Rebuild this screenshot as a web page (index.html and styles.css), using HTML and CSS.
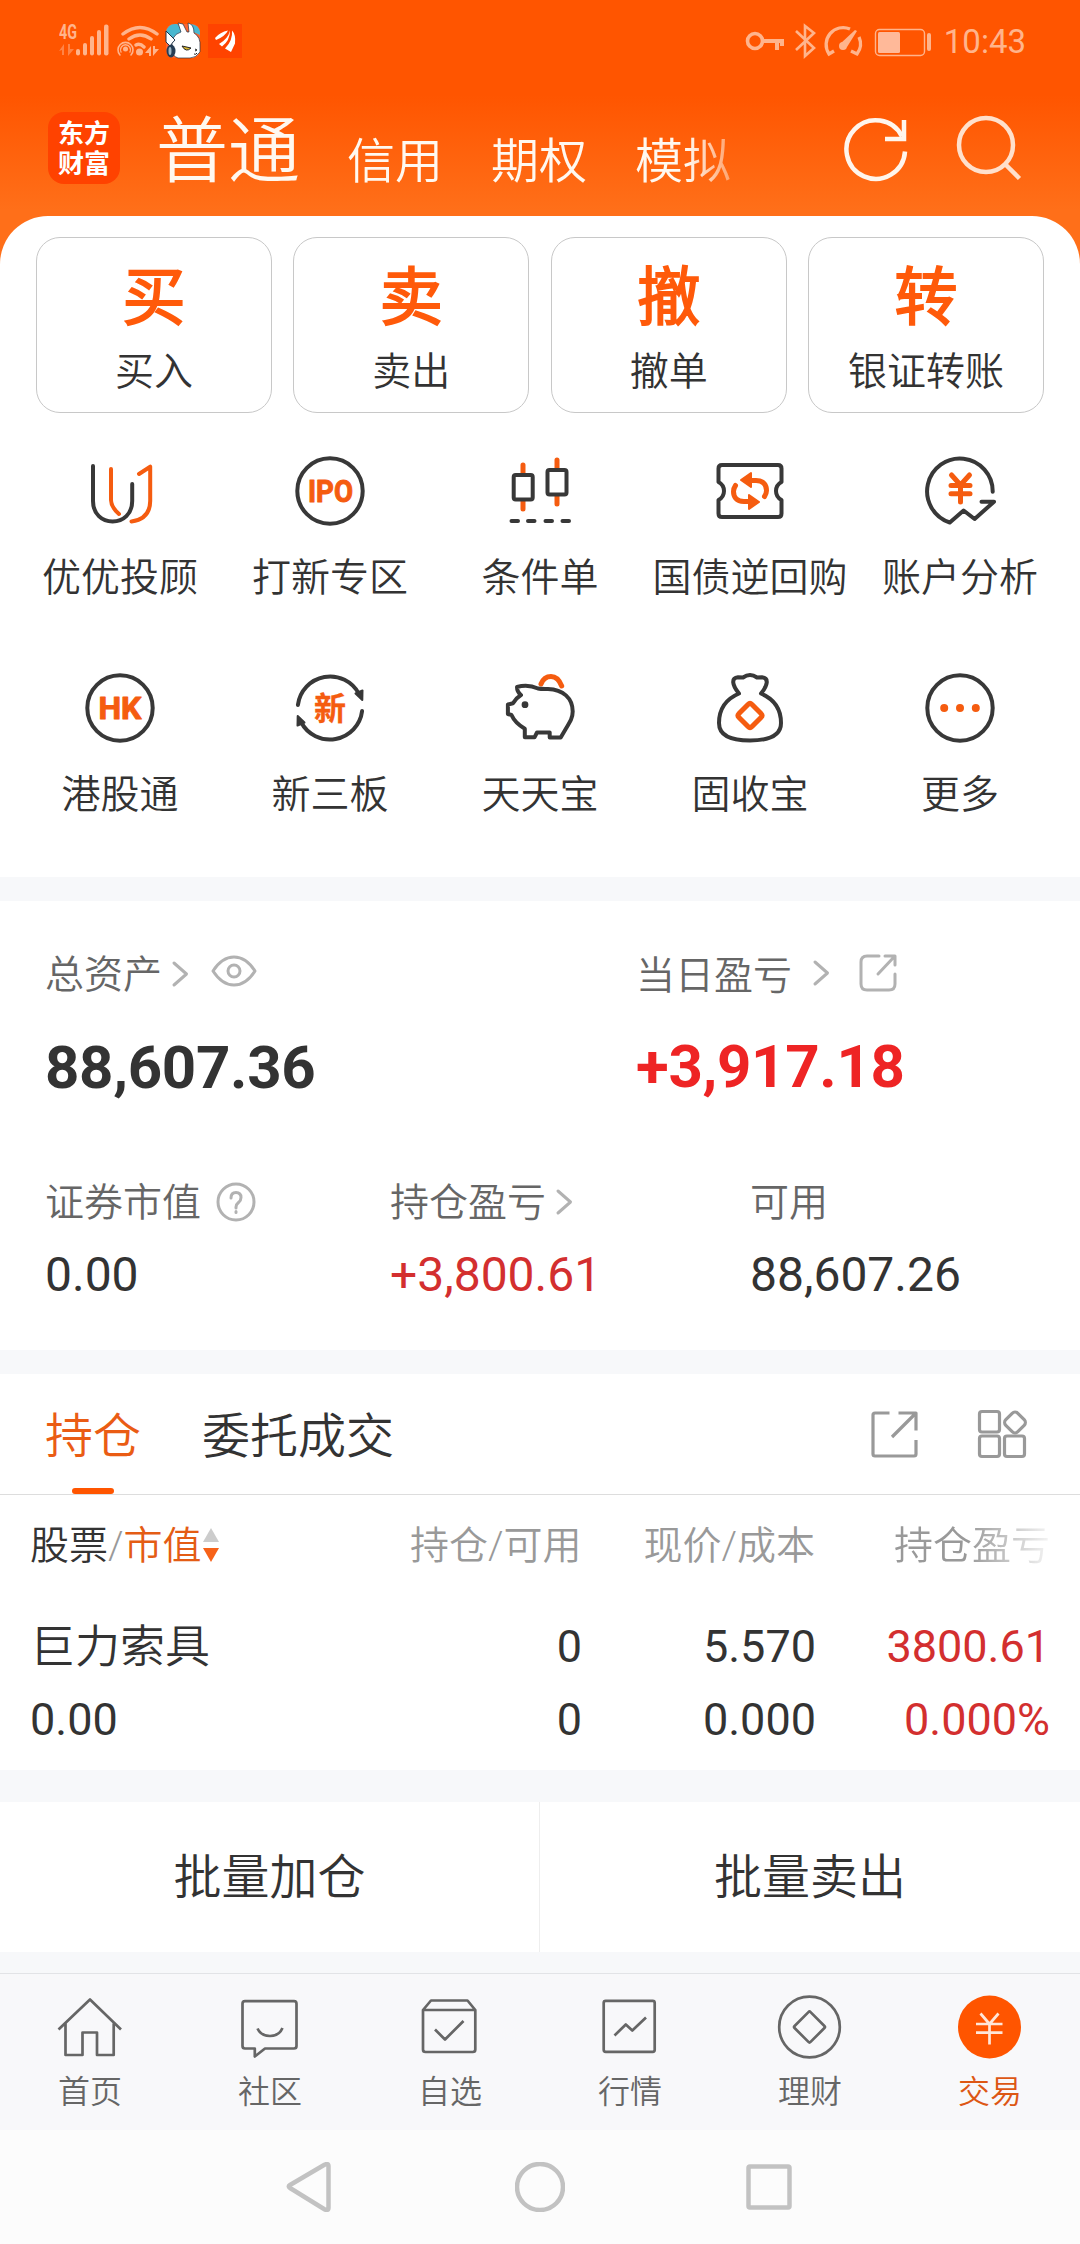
FILE: index.html
```html
<!DOCTYPE html>
<html lang="zh-CN">
<head>
<meta charset="utf-8">
<title>东方财富 交易</title>
<link rel="stylesheet" href="styles.css">
</head>
<body>
<header class="header">
  <div class="status">
    <svg class="status-left" width="200" height="40" viewBox="0 0 200 40">
      <g fill="#ffb48c">
        <text class="net" x="0" y="19" textLength="18" lengthAdjust="spacingAndGlyphs">4G</text>
        <path d="M0 31l5-7v11h-2v-5zM7 24v11M9 24h2v5h4l-6 7z" opacity=".5"/>
        <rect x="17" y="29" width="4" height="6.500" rx="2"/><rect x="24" y="23" width="4" height="12.500" rx="2"/><rect x="31" y="16" width="4" height="19.500" rx="2"/><rect x="38" y="10" width="4" height="25.500" rx="2"/><rect x="45" y="4.500" width="4.500" height="31" rx="2"/>
        <circle cx="80.500" cy="32" r="3.500"/><circle cx="66.500" cy="29" r="2.500"/>
        <path d="M86 33l6-7v10h-2v-3zM94 26h2v3h4l-6 7z"/>
      </g>
      <g fill="none" stroke="#ffb48c" stroke-width="3.400" stroke-linecap="round">
        <path d="M64 14q17-13 34 0M70 19q11-8 22 0M77 25q4-2 8 2"/>
        <path d="M61 35a7.500 7.500 0 1 1 11 0" stroke-width="1.600"/><path d="M62 32a5 5 0 1 1 9 0" stroke-width="1.400"/>
      </g>
      <rect x="107" y="4" width="34" height="34" rx="8" fill="#ff6430"/>
      <path d="M107 22v-10q2-8 9-8h2l8 8-10 6zM132 4q8 1 9 8v3l-9-4z" fill="#49b7cf"/>
      <path d="M113 30q-2-15 9-18L119 3l5 1 4 8h2l-1-9q6 1 6 10 7 4 6 14v5q-4 6-10 6h-12q-6-2-6-8z" fill="#fff" stroke="#203448" stroke-width=".7"/>
      <path d="M107 11l9 9q-4 3-4 7l-5-5z" fill="#fff" stroke="#203448"/>
      <ellipse cx="112" cy="31" rx="4.500" ry="6.500" fill="#263d54"/><ellipse cx="111" cy="31" rx="1.500" ry="4" fill="#9fb9c6"/>
      <path d="M123 26l9 2q-5 5-9-2z" fill="#d9b731" stroke="#222"/><path d="M136 29l2 1-2 1M135 34q2 1 3-1" fill="none" stroke="#222"/>
      <rect x="149" y="4" width="34" height="34" fill="#ff4300"/>
      <path d="M156 18q5-6 13-7.500-3 6-12 9.500zM160 24q9-5 11-13.500 0 10-8 16zM166 28.500q8-8 7-18 4 4 3 13l-4 8.500z" fill="#fff"/>
    </svg>
    <svg class="status-right" width="190" height="40" viewBox="0 0 190 40">
      <g fill="none" stroke="#ffb48c" stroke-width="3.600">
        <circle cx="14" cy="21" r="7.500"/><path d="M21 21h22M36 21v9M41 21v5" stroke-width="4"/>
        <path d="M55 11l18 17-9 8V6l9 7-18 17" stroke-width="2.600"/>
        <path d="M109 9A17 17 0 0 0 88 34l5-3M118 17q4 9-2 17l-6-3" stroke-width="3.300"/>
        <rect x="134.500" y="9.500" width="49" height="26" rx="4" stroke-width="1.400"/>
      </g>
      <path d="M99 24l15-14 2 1-10 16z" fill="#ffb48c"/><circle cx="102" cy="26" r="4" fill="#ffb48c"/>
      <rect x="137" y="12" width="22" height="21" rx="1.500" fill="#ffb999"/><rect x="186" y="13" width="4" height="18" rx="2" fill="#ffb48c"/>
    </svg>
    <span class="time">10:43</span>
  </div>
  <nav class="modes">
    <div class="logo"><span>东方</span><span>财富</span></div>
    <span class="mode mode-on">普通</span>
    <div class="mode-list"><span>信用</span><span>期权</span><span>模拟</span></div>
    <svg class="hicon" width="70" height="70" viewBox="0 0 70 70" fill="none" stroke="#fff5ec" stroke-width="4.500"><path d="M65 36.500A29.300 29.300 0 1 1 62 21.500"/><path d="M64 5v19H45"/></svg>
    <svg class="hicon search" width="70" height="70" viewBox="0 0 70 70" fill="none" stroke="#ffe0cc" stroke-width="4.500"><circle cx="31" cy="31" r="27"/><path d="M50 50l14.500 14.500"/></svg>
  </nav>
</header>

<section class="panel actions">
  <div class="quick">
    <div class="card"><b>买</b><span>买入</span></div>
    <div class="card"><b>卖</b><span>卖出</span></div>
    <div class="card"><b>撤</b><span>撤单</span></div>
    <div class="card"><b>转</b><span>银证转账</span></div>
  </div>
  <div class="grid">
    <div class="item"><svg class="ic" viewBox="0 0 72 72"><path d="M9 11V46C9 59 18 66.500 28.600 66.500S48.200 59 48.200 46V29"/><path class="o" d="M27 14V45Q27 52 35 59M55 19L66.200 11.700V46Q66 64 47.500 66.500"/></svg><span>优优投顾</span></div>
    <div class="item"><svg class="ic" viewBox="0 0 72 72"><circle cx="36" cy="36" r="32.700"/><text class="t" x="14" y="47.300" textLength="45" lengthAdjust="spacingAndGlyphs">IPO</text></svg><span>打新专区</span></div>
    <div class="item"><svg class="ic" viewBox="0 0 72 72"><path class="o thick" d="M19 10V18M19 46V54M53 5V13M53 41V49"/><rect x="9.700" y="20" width="19" height="24.500" rx="2"/><rect x="43.500" y="15" width="19" height="24.500" rx="2"/><path d="M7.500 66H14M24 66h6.500M41.500 66H48M58.500 66H65"/></svg><span>条件单</span></div>
    <div class="item"><svg class="ic" viewBox="0 0 72 72"><path d="M8 10H64q3.500 0 3.500 3.500V27q-5.500 3-5.500 9t5.500 9V58.500q0 3.500-3.500 3.500H8q-3.500 0-3.500-3.500V45q5.500-3 5.500-9T4.500 27V13.500Q4.500 10 8 10z"/><path class="o thick" d="M36 25.500h6c8 0 10.500 5 10.500 10q0 3-2 6"/><path class="of" d="M27 25l10-7v14z"/><g transform="rotate(180 36 36)"><path class="o thick" d="M36 25.500h6c8 0 10.500 5 10.500 10q0 3-2 6"/><path class="of" d="M27 25l10-7v14z"/></g></svg><span>国债逆回购</span></div>
    <div class="item"><svg class="ic" viewBox="0 0 72 72"><path d="M68.700 36.700A32.800 32.800 0 1 0 25.800 67.500L39.600 55.500 50.600 64 70 46.700H57.500"/><path class="o thick" d="M27.500 20L36.500 30 45.500 20M36.500 30V47M27 30.500H46M27 38.700H46"/></svg><span>账户分析</span></div>
    <div class="item"><svg class="ic" viewBox="0 0 72 72"><circle cx="36" cy="36" r="32.700"/><text class="t" x="14.500" y="47.300" textLength="43" lengthAdjust="spacingAndGlyphs">HK</text></svg><span>港股通</span></div>
    <div class="item"><svg class="ic" viewBox="0 0 72 72"><path d="M3.900 33A32.500 32.500 0 0 1 65 22M68.100 39A32.500 32.500 0 0 1 7 50"/><path class="df" d="M68.300 28L61.500 21.500l7-3zM3.700 44l6.800 6.500-7 3z"/><text class="t xin" x="36" y="48" text-anchor="middle">新</text></svg><span>新三板</span></div>
    <div class="item"><svg class="ic" viewBox="0 0 72 72"><path class="o thick" d="M37 12Q40 4.500 47 4.500T57.700 14"/><path d="M13 15Q24 12 34 16.500Q37 17.200 44 17C59 17.500 68.700 26 68.700 39.500C68.700 46 66 50 62 56.500L56.700 65.500H45.700V60.500H33L30.500 65.300H20.800V56.700Q11 51 7.500 43L3.900 42V32.500L9 31.300Q12 26 17 23Q13 20 13 15z"/><circle class="df" cx="21" cy="32.700" r="2.400"/></svg><span>天天宝</span></div>
    <div class="item"><svg class="ic" viewBox="0 0 72 72"><path d="M25 21.500C18 13 17 6 24 5.300L29 5.500Q36 .500 43 5.500L48 5.300C55 6 54 13 47 21.500Q67 30 67 51C67 64 54 68.500 36 68.500S5 64 5 51Q5 30 25 21.500z"/><path class="o thick" d="M34 32.500q2-2 4 0l9 9q2 2 0 4l-9 9q-2 2-4 0l-9-9q-2-2 0-4z"/></svg><span>固收宝</span></div>
    <div class="item"><svg class="ic" viewBox="0 0 72 72"><circle cx="36" cy="36" r="32.700"/><g class="of"><circle cx="20.200" cy="36" r="3"/><circle cx="36" cy="36" r="3"/><circle cx="51.800" cy="36" r="3"/></g></svg><span>更多</span></div>
  </div>
</section>

<section class="panel assets">
  <div class="asset-top">
    <div class="col-main">
      <div class="lab">总资产<svg class="chev" viewBox="0 0 18 28"><path d="M3 3l12.500 11L3 25"/></svg><svg class="eye" viewBox="0 0 46 32"><path d="M2 16Q11 2 23 2T44 16Q35 30 23 30T2 16z"/><circle cx="23" cy="16" r="6"/></svg></div>
      <strong>88,607.36</strong>
    </div>
    <div class="col-day">
      <div class="lab lab-low">当日盈亏<svg class="chev chev-far" viewBox="0 0 18 28"><path d="M3 3l12.500 11L3 25"/></svg><svg class="share-sm" viewBox="0 0 40 40"><path d="M21 3H9q-6 0-6 6V31q0 6 6 6H31q6 0 6-6V21M27 3h10V12M36 4L20 21"/></svg></div>
      <strong class="up">+3,917.18</strong>
    </div>
  </div>
  <div class="asset-sub">
    <div><div class="lab">证券市值<svg class="help" viewBox="0 0 40 40"><circle cx="20" cy="20" r="18"/><path d="M15 16q0-5.500 5-5.500t5 5q0 3-2.500 5T20 25v1M20 29.500v1"/></svg></div><p>0.00</p></div>
    <div><div class="lab">持仓盈亏<svg class="chev" viewBox="0 0 18 28"><path d="M3 3l12.500 11L3 25"/></svg></div><p class="red">+3,800.61</p></div>
    <div><div class="lab">可用</div><p>88,607.26</p></div>
  </div>
</section>

<section class="panel holdings">
  <div class="tabs">
    <span class="tab tab-on">持仓</span><span class="tab">委托成交</span>
    <svg class="tool" viewBox="0 0 50 50"><path d="M20.500 4H6Q4 4 4 6V45q0 2 2 2H45q2 0 2-2V31M29.500 4H47V21.500M46 5L23 28"/></svg>
    <svg class="tool last" viewBox="0 0 50 50"><rect x="2.500" y="2.500" width="20" height="20.500" rx="2.500"/><rect x="2.500" y="27" width="20" height="20.500" rx="2.500"/><rect x="27.500" y="27" width="20" height="20.500" rx="2.500"/><rect x="29.500" y="5" width="17" height="17" rx="4" transform="rotate(45 38 13.500)"/></svg>
  </div>
  <div class="row thead">
    <div class="name"><span class="dark">股票</span>/<span class="sorted">市值</span><svg class="sort" viewBox="0 0 16 36"><path fill="#ccc" d="M8 1l8 14H0z"/><path fill="#f76218" d="M8 35l8-14H0z"/></svg></div>
    <div>持仓/可用</div><div>现价/成本</div><div class="fade">持仓盈亏</div>
  </div>
  <div class="row r1"><div class="name">巨力索具</div><div>0</div><div>5.570</div><div class="red">3800.61</div></div>
  <div class="row r2"><div class="name">0.00</div><div>0</div><div>0.000</div><div class="red">0.000%</div></div>
</section>

<section class="batch"><div>批量加仓</div><div>批量卖出</div></section>

<nav class="tabbar">
  <div><svg viewBox="0 0 66 66"><path d="M1.500 35.500L33 5.500 64 35.500M8.500 29.500V61H25.500V38.500H40V61H56.700V29.500"/></svg><span>首页</span></div>
  <div><svg viewBox="0 0 66 66"><path d="M8 7.200H57q2.500 0 2.500 2.500V52q0 2.500-2.500 2.500H28L17.800 62.500V54.500H8q-2.500 0-2.500-2.500V9.700Q5.500 7.200 8 7.200zM20.500 34.500Q24 42 33 42T45.500 34"/></svg><span>社区</span></div>
  <div><svg viewBox="0 0 66 66"><path d="M6 16H58.300V55.500q0 2.500-2.500 2.500H8.500Q6 58 6 55.500zL14 6.500H50.500L58.300 16M18 35.500L28 45.500 46.500 27"/></svg><span>自选</span></div>
  <div><svg viewBox="0 0 66 66"><rect x="6.700" y="6.800" width="51" height="51" rx="2"/><path d="M17.500 41.500L28.800 30.500 35.300 36.500 49 23.500"/></svg><span>行情</span></div>
  <div><svg viewBox="0 0 66 66"><circle cx="32.500" cy="33" r="30.300"/><rect x="21.200" y="21.700" width="22.600" height="22.600" rx="1.500" transform="rotate(45 32.500 33)"/></svg><span>理财</span></div>
  <div class="active"><svg viewBox="0 0 66 66"><circle class="disc" cx="32.500" cy="33" r="31.500"/><path class="yen" d="M23.500 19.500L32.500 30 41.500 19.500M32.500 30V50.500M19 30H45.500M19 38.700H45.500"/></svg><span>交易</span></div>
</nav>
<footer class="sysnav">
  <svg viewBox="0 0 50 50"><path d="M4 25.500Q1.500 24 4 22.500L38 2.500Q42.500 0 42.500 4V45Q42.500 49 38 46.500z" transform="translate(0 .5)"/></svg>
  <svg viewBox="0 0 50 50"><circle cx="25" cy="25" r="23"/></svg>
  <svg viewBox="0 0 50 50"><rect x="4.500" y="4.500" width="41" height="41" rx="1.500"/></svg>
</footer>
</body>
</html>
```
FILE: styles.css
```css
* { box-sizing: border-box; }
body {
  margin: 0;
  width: 1080px;
  background: #f7f8fa;
  color: #333;
  font: 350 39px/48px Roboto, "Noto Sans CJK SC DemiLight", "Noto Sans CJK SC", sans-serif;
}
svg { display: block; flex: none; }
p { margin: 0; }

.header { height: 264px; background: linear-gradient(#ff5500 0, #ff5500 95px, #ff6f19 210px, #ff6f19); }
.status { display: flex; height: 84px; padding: 20px 54px 0 59px; }
.status-right { margin-left: auto; }
.net { font: 700 20px Roboto, sans-serif; }
.time { margin-left: 13px; font-size: 33px; font-weight: 400; line-height: 44px; color: #ffb48c; }
.modes { display: flex; height: 132px; padding: 28px 55px 0 48px; color: #fff8f0; }
.logo {
  display: flex; flex-direction: column; width: 72px; height: 72px; padding-top: 5px;
  border-radius: 16px; background: #ff4200; color: #fff; text-align: center;
  font: 700 26px/30px "Noto Sans CJK SC", sans-serif;
}
.mode-on { margin: 2px 0 0 36px; font-size: 72px; line-height: 76px; }
.mode-list { display: flex; gap: 48px; width: 384px; margin: 19px 0 0 47px; font-size: 48px; line-height: 62px;
  -webkit-mask: linear-gradient(90deg, #000 340px, transparent 415px); mask: linear-gradient(90deg, #000 340px, transparent 415px); }
.hicon { margin: 3px 0 0 auto; }
.search { margin: 2px 0 0 45px; }

.panel { background: #fff; }
.actions { height: 661px; margin-top: -48px; padding: 21px 36px 0; border-radius: 48px 48px 0 0; }
.quick { display: grid; grid-template-columns: repeat(4, 1fr); gap: 21.4px; }
.card { display: flex; flex-direction: column; align-items: center; height: 176px; padding-top: 22px; border: 1px solid #c8c8c8; border-radius: 24px; }
.card b { height: 76px; font-size: 63px; line-height: 76px; font-weight: 500; color: #ff5a0a; -webkit-text-stroke: 2.2px #ff5a0a; }
.card span { margin-top: 12px; }
.grid { display: grid; grid-template-columns: repeat(5, 210px); grid-auto-rows: 217px; margin: 42px -21px 0; }
.item { display: flex; flex-direction: column; align-items: center; white-space: nowrap; }
.item span { margin-top: 27px; }
.ic { width: 72px; height: 72px; fill: none; stroke: #383838; stroke-width: 4; stroke-linecap: round; stroke-linejoin: round; }
.ic .o { stroke: #f55c10; }
.ic .thick { stroke-width: 5; }
.ic .of { fill: #f55c10; stroke: #f55c10; stroke-width: 2; }
.ic .df { fill: #383838; stroke-width: 2; }
.ic .t { font: 700 31px Roboto, "Noto Sans CJK SC", sans-serif; fill: #f55c10; stroke: #f55c10; stroke-width: 1; }
.ic .xin { font-size: 32px; stroke-width: .3; }

.assets { height: 449px; margin-top: 24px; padding: 50px 45px 0; }
.asset-top { display: grid; grid-template-columns: 591px 1fr; height: 226px; }
.lab { display: flex; height: 48px; color: #666; white-space: nowrap; }
.lab svg, .tool { fill: none; stroke: #b2b2b2; stroke-width: 3; stroke-linecap: round; stroke-linejoin: round; }
.chev { width: 18px; height: 28px; margin: 9px 0 0 9px; }
.col-day .lab { padding-top: 1px; }
.chev-far { margin: 7px 0 0 20px; }
.eye { width: 46px; height: 32px; margin: 4px 0 0 22px; }
.share-sm { width: 40px; height: 40px; margin: 1px 0 0 28px; }
.help { width: 40px; height: 40px; margin: 3px 0 0 15px; }
strong { display: block; margin-top: 33px; font-size: 60px; line-height: 72px; font-weight: 700; letter-spacing: -.3px; }
.up { margin-top: 32px; color: #ee2424; }
.red { color: #d32f2f; }
.asset-sub { display: grid; grid-template-columns: 345px 360px 1fr; }
.asset-sub .lab { margin-top: 2px; }
.asset-sub p { margin-top: 18px; font-size: 48px; line-height: 60px; font-weight: 400; }

.holdings { height: 396px; margin-top: 24px; }
.tabs { display: flex; height: 121px; padding: 0 53px 0 45px; border-bottom: 1px solid #ddd; font-size: 48px; line-height: 126px; }
.tab { margin-right: 61px; }
.tab-on { display: flex; flex-direction: column; color: #ea5c14; }
.tab-on::after { content: ""; width: 42px; height: 6px; margin: -12px 0 0 27px; border-radius: 3px; background: #ff5500; }
.tool { width: 50px; height: 50px; margin: 35px 0 0 auto; stroke: #999; stroke-width: 3.2; stroke-linecap: butt; }
.last { margin-left: 58px; }
.row { display: grid; grid-template-columns: 381px 171px 234px 1fr; padding: 0 30px; text-align: right; white-space: nowrap; font-size: 45px; font-weight: 400; }
.name { display: flex; text-align: left; font-weight: 350; }
.thead { grid-template-columns: 380px 171px 234px 1fr; font-size: 39px; font-weight: 350; line-height: 102px; height: 112px; color: #999; }
.dark { color: #333; }
.sorted { color: #e45c14; }
.sort { width: 16px; height: 36px; margin: 32px 0 0 1px; }
.fade { -webkit-mask: linear-gradient(90deg, #000 65%, rgba(0,0,0,.1)); mask: linear-gradient(90deg, #000 65%, rgba(0,0,0,.1)); }
.r1 { height: 76px; line-height: 80px; }
.r1 .name { line-height: 82px; }
.r2 { height: 73px; line-height: 73px; }
.r2 .name { font-weight: 400; }

.batch { display: grid; grid-template-columns: 1fr 1fr; height: 150px; margin-top: 32px; background: #fff; font-size: 48px; line-height: 148px; text-align: center; }
.batch div { height: 150px; padding-top: 2px; }
.batch div:first-child { border-right: 1px solid #eee; }
.tabbar { display: grid; grid-template-columns: repeat(6, 1fr); height: 157px; margin-top: 21px; padding-top: 20px; border-top: 1px solid #e2e3e6; background: #f8f8fa; color: #666; font-size: 32px; line-height: 42px; }
.tabbar div { display: flex; flex-direction: column; align-items: center; }
.tabbar svg { width: 66px; height: 66px; fill: none; stroke: #666; stroke-width: 2.7; stroke-linejoin: round; }
.tabbar span { margin-top: 11px; }
.tabbar .disc { fill: #ff5500; stroke: none; }
.tabbar .yen { stroke: #ffe6d8; }
.active { color: #dd5714; }
.sysnav { display: flex; justify-content: center; gap: 179px; height: 114px; padding-top: 32px; background: #fcfcfc; }
.sysnav svg { width: 50px; height: 50px; fill: none; stroke: #c2c2c2; stroke-width: 4.500; }
```
